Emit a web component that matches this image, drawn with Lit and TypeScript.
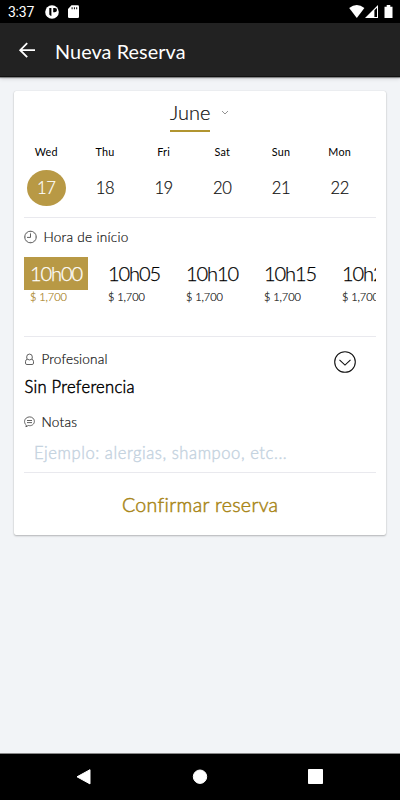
import { LitElement, html, css, svg } from "lit";
import { customElement, property } from "lit/decorators.js";
import { classMap } from "lit/directives/class-map.js";

@customElement("status-bar")
class StatusBar extends LitElement {
  static styles = css`
    :host { display: flex; align-items: center; height: 23px; background: #000; color: #fff;
      font: 400 14px/23px Roboto, sans-serif; padding: 0 6px 0 8px; box-sizing: border-box; }
    .time { width: 37px; padding-top: 1px; letter-spacing: -0.25px; }
    .left { flex: 1; display: block; }
    svg { display: block; flex: none; }
  `;
  render() {
    return html`
      <span class="time">3:37</span>
      <svg width="36" height="23" viewBox="0 0 36 23" fill="#fff">
        <circle cx="7" cy="12" r="6.8" />
        <path d="M4.3 8h2.1v8a4 4 0 0 1-2.1-1.6zM8.2 8h1.7a2.1 2.1 0 0 1 0 4.2H8.2z" fill="#000" />
        <path d="M26.5 5.2h6.2q1.3 0 1.3 1.3v10.2q0 1.3-1.3 1.3h-8.4q-1.3 0-1.3-1.3V9z" />
        <path d="M26.6 7.2h1v2h-1zM28.9 7.2h1v2h-1zM31.2 7.2h1v2h-1z" fill="#000" />
      </svg>
      <span class="left"></span>
      <svg width="46" height="23" viewBox="348 0 46 23" fill="#fff">
        <path d="M349.2 8.1q7.6-6 15.2 0L356.8 18z" />
        <path d="M378 5v13h-13z" />
        <path d="M374.4 10.3l2.6-2.5V17h-2.6z" fill="#000" />
        <path d="M384.5 6.8h2.2V5h3.6v1.8h2.2V18h-8z" />
      </svg>`;
  }
}

@customElement("app-bar")
class AppBar extends LitElement {
  static styles = css`
    :host { display: flex; align-items: center; height: 54px; background: #222; box-sizing: border-box;
      padding-left: 18px; gap: 19px; border-bottom: 1px solid #111; position: relative;
      box-shadow: 0 1px 1px rgba(0,0,0,.4), 0 2px 4px rgba(0,0,0,.12); }
    .title { font: 400 19.8px/28px Lato, sans-serif; letter-spacing: .1px; color: #fff; padding-top: 3px; }
    svg { display: block; }
  `;
  render() {
    return html`
      <svg width="18" height="18" viewBox="0 0 18 18" fill="none" stroke="#fff" stroke-width="1.8">
        <path d="M17 9.2H3M9.2 2.2L2.2 9.2l7 7" />
      </svg>
      <span class="title">Nueva Reserva</span>`;
  }
}

const clockIcon = svg`<svg width="13" height="14" viewBox="0 0 13 14" fill="none" stroke="#444" stroke-width=".85">
  <circle cx="6.5" cy="7" r="5.8" /><path d="M6.5 3.4V7.4H3" />
  <path d="M6.5 1.2v1M6.5 11.8v1M.8 7h1M11.2 7h1M10.2 3.3l.5-.5M2.3 2.8l.5.5M10.2 10.7l.5.5M2.8 10.7l-.5.5" stroke-width=".5" /></svg>`;
const personIcon = svg`<svg width="11" height="13" viewBox="0 0 11 13" fill="none" stroke="#444" stroke-width=".85">
  <path d="M3.2 6.2Q2.7 5.5 2.7 3.9a2.8 2.8 0 0 1 5.6 0q0 1.6-.5 2.3M3.2 6.2q2.3 1.5 4.6 0M3.2 6.2Q1.5 6.7 1.5 8.7v1.4q0 1.4 1.4 1.4h5.2q1.4 0 1.4-1.4V8.7q0-2-1.7-2.5" /></svg>`;
const noteIcon = svg`<svg width="11" height="12" viewBox="0 0 11 12" fill="none" stroke="#444" stroke-width=".85">
  <path d="M2.3 9.1C.1 7.4-.1 4 2.2 2.1c2-1.6 5-1.6 6.7 0 2.1 1.9 1.9 5.1-.3 6.7-1.3.9-2.8 1.1-4.2.7L1.9 10.8zM3 4.5h5M3 6.6h5" /></svg>`;

@customElement("section-label")
class SectionLabel extends LitElement {
  @property() text = "";
  @property({ attribute: false }) icon: unknown;
  static styles = css`
    :host { display: flex; align-items: center; gap: 6px; height: 18px; color: #111; }
    .text { font: 300 13.6px/18px Lato, sans-serif; letter-spacing: var(--spacing, .5px); -webkit-text-stroke: .2px; }
    svg { display: block; }
  `;
  render() {
    return html`${this.icon}<span class="text">${this.text}</span>`;
  }
}

const days = [["Wed", 17], ["Thu", 18], ["Fri", 19], ["Sat", 20], ["Sun", 21], ["Mon", 22]];
const slots = ["10h00", "10h05", "10h10", "10h15", "10h20"];

@customElement("booking-card")
class BookingCard extends LitElement {
  static styles = css`
    :host { display: flex; flex-direction: column; box-sizing: border-box; width: 372px; height: 444px;
      margin: 14px 0 0 14px; padding: 0 10px 0 10.4px; background: #fff; border-radius: 2px; color: #111;
      font-family: Lato, sans-serif; box-shadow: 0 1px 2px rgba(0,0,0,.25), 0 0 1px rgba(0,0,0,.18); }
    .month { display: flex; height: 41px; padding-left: 145.5px; gap: 10.5px; box-sizing: border-box; }
    .name { width: 40.5px; height: 41px; box-sizing: border-box; border-bottom: 2px solid #b19530;
      font: 300 20px/28px Lato, sans-serif; padding-top: 7px; letter-spacing: 0; -webkit-text-stroke: .2px; white-space: nowrap; }
    .caret { margin-top: 19px; }
    .days { display: grid; grid-template-columns: repeat(6, 58.7px); margin-left: -7.5px; height: 84.5px; padding-top: 12px; box-sizing: border-box; }
    .day { display: flex; flex-direction: column; align-items: center; gap: 10px; }
    .week { font: 400 10.8px/16px Lato, sans-serif; letter-spacing: .25px; color: #000; }
    .num { width: 39px; height: 36px; border-radius: 50%; text-align: center; font: 300 16.6px/37px Lato, sans-serif;
      letter-spacing: -.4px; -webkit-text-stroke: .2px; }
    .day.on .num { background: #b89945; color: #fff; }
    .rule { height: 1px; background: #e9e9ee; flex: none; }
    .start { margin-top: 10.5px; --spacing: .27px; }
    .slots { display: flex; gap: 14.5px; overflow: hidden; margin-top: 10.5px; height: 79px; }
    .slot { flex: none; width: 63.5px; }
    .hour { height: 33.5px; padding-left: 5.5px; font: 300 20px/33px Lato, sans-serif; letter-spacing: -1.05px; color: #000; white-space: nowrap; -webkit-text-stroke: .25px; }
    .price { padding-left: 5.5px; font: 300 11px/13px Lato, sans-serif; letter-spacing: -.05px; -webkit-text-stroke: .2px; }
    .slot.on .hour { background: #b89945; color: #fff; }
    .slot.on .price { color: #a98325; }
    .pro { display: flex; justify-content: space-between; padding: 14px 20px 0 0; height: 38px; box-sizing: border-box; --spacing: .15px; }
    .pro section-label { margin-top: -.5px; }
    .open { display: block; }
    .choice { font: 300 16.6px/24px Lato, sans-serif; letter-spacing: .28px; height: 24px; color: #000; -webkit-text-stroke: .45px; }
    .notes { margin-top: 14px; --spacing: .3px; }
    .hint { font: 300 16.6px/24px Lato, sans-serif; letter-spacing: .56px; color: #c5d3df; padding-left: 9.6px; margin-top: 10px; height: 31px; white-space: nowrap; -webkit-text-stroke: .4px; }
    .confirm { text-align: center; font: 300 19.6px/28px Lato, sans-serif; letter-spacing: .33px; color: #a88618; margin-top: 18.5px; -webkit-text-stroke: .5px; }
  `;
  render() {
    return html`
      <div class="month">
        <div class="name">June</div>
        <svg class="caret" width="8" height="6" viewBox="0 0 8 6" fill="none" stroke="#777" stroke-width=".8"><path d="M1 1l3 3 3-3" /></svg>
      </div>
      <div class="days">
        ${days.map(([w, n], i) => html`<div class=${classMap({ day: true, on: i === 0 })}>
          <span class="week">${w}</span><span class="num">${n}</span></div>`)}
      </div>
      <div class="rule"></div>
      <section-label class="start" .icon=${clockIcon} text="Hora de início"></section-label>
      <div class="slots">
        ${slots.map((s, i) => html`<div class=${classMap({ slot: true, on: i === 0 })}>
          <div class="hour">${s}</div><div class="price">$ 1,700</div></div>`)}
      </div>
      <div class="rule"></div>
      <div class="pro">
        <section-label .icon=${personIcon} text="Profesional"></section-label>
        <svg class="open" width="22" height="22" viewBox="0 0 22 22" fill="none" stroke="#111" stroke-width="1.1">
          <circle cx="11" cy="11" r="10.3" /><path d="M5.5 8.8l5.5 5.3 5.5-5.3" /></svg>
      </div>
      <div class="choice">Sin Preferencia</div>
      <section-label class="notes" .icon=${noteIcon} text="Notas"></section-label>
      <div class="hint">Ejemplo: alergias, shampoo, etc...</div>
      <div class="rule"></div>
      <div class="confirm">Confirmar reserva</div>`;
  }
}

@customElement("nav-bar")
class NavBar extends LitElement {
  static styles = css`
    :host { display: block; height: 47px; background: #000; border-top: 1px solid #888; box-sizing: border-box; }
    svg { display: block; }
  `;
  render() {
    return html`<svg width="400" height="46" viewBox="0 754 400 46" fill="#fff" stroke="#fff" stroke-linejoin="round">
      <path d="M90 769.7v14.2L77 776.8z" />
      <circle cx="200" cy="776.7" r="6.7" />
      <rect x="308.5" y="769.5" width="14" height="14" />
    </svg>`;
  }
}

@customElement("app-root")
class AppRoot extends LitElement {
  static styles = css`
    :host { display: flex; flex-direction: column; width: 400px; height: 800px; background: #f2f4f7; overflow: hidden; }
    .body { flex: 1; display: flex; flex-direction: column; align-items: flex-start; }
  `;
  render() {
    return html`<status-bar></status-bar><app-bar></app-bar>
      <div class="body"><booking-card></booking-card></div><nav-bar></nav-bar>`;
  }
}
